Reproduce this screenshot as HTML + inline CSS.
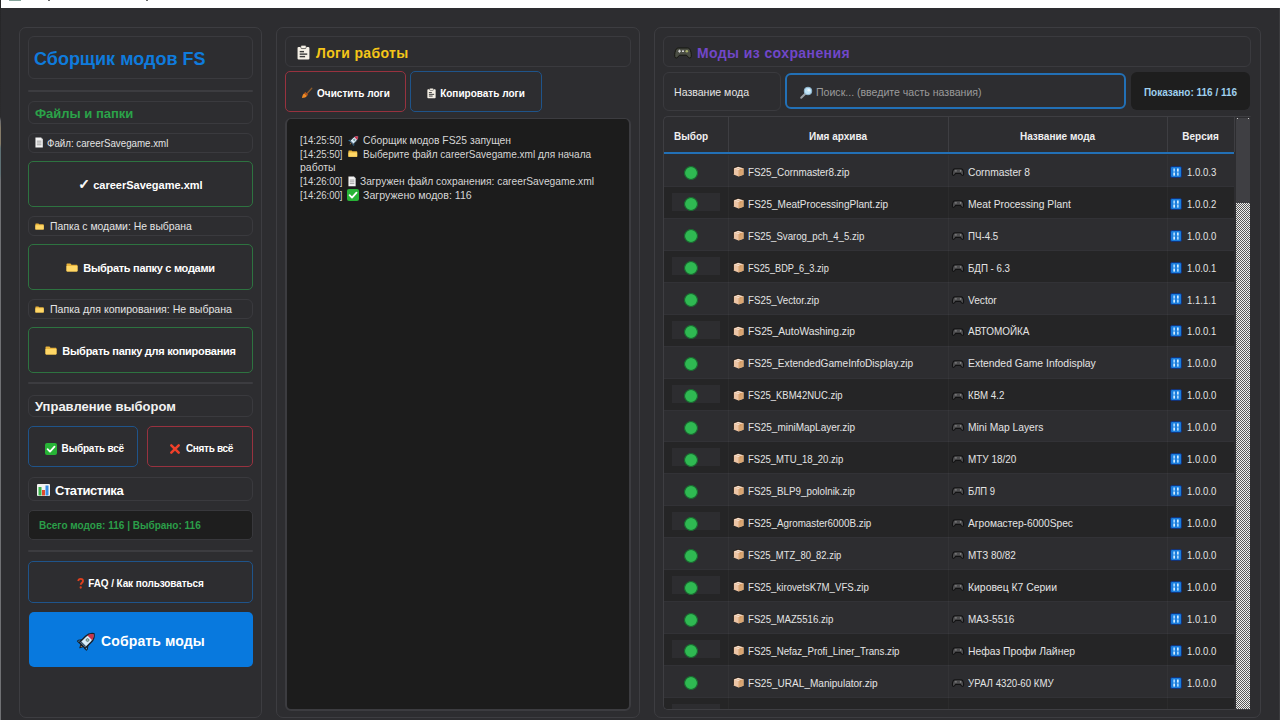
<!DOCTYPE html>
<html lang="ru">
<head>
<meta charset="utf-8">
<title>Сборщик модов FS25</title>
<style>
*{box-sizing:border-box;margin:0;padding:0}
html,body{width:1280px;height:720px;overflow:hidden;background:#2d2d30}
body{position:relative;font-family:"Liberation Sans","DejaVu Sans",sans-serif;font-size:11px;color:#e4e4e4}
.abs{position:absolute}
.titlebar{left:0;top:0;width:1280px;height:8px;background:#fff}
.edgeL{left:0;top:0;width:1px;height:720px;background:linear-gradient(#262628 0,#2b2b2d 117px,#6a6a6c 121px,#857b68 128px,#857b68 144px,#5d7074 148px,#5d7074 174px,#707174 180px,#707174 720px)}
.edgeR{left:1279px;top:8px;width:1px;height:712px;background:#3b3b3e}
.panel{border:1px solid #3d3d41;border-radius:7px}
.box{border:1px solid #3a3a3e;border-radius:6px;display:flex;align-items:center;white-space:nowrap}
.sep{height:2px;background:#3c3c40;border-radius:1px}
.btn{padding-top:1px;border:1px solid #3e3e42;border-radius:5px;display:flex;align-items:center;justify-content:center;font-weight:bold;color:#fff;white-space:nowrap}
.g{border-color:#2d7340}
.b{border-color:#1f548a}
.r{border-color:#98323f}
svg{display:block;flex:none;overflow:visible}
.n{display:inline-block;transform-origin:0 50%;white-space:nowrap}
.cell .n{position:relative;top:.8px}
.log{left:285px;top:118px;width:346px;height:593px;background:#1c1c1c;border:2px solid #3c3c40;border-top-width:1.5px;border-radius:6px}
.ll{position:absolute;left:13px;height:14px;color:#d6d6d6;white-space:nowrap}
.tbl{left:663px;top:116px;width:588px;height:594px;border:1px solid #3e3e42;border-right-color:transparent;border-radius:5px 0 0 5px;overflow:hidden}
.th{position:absolute;top:0;height:35px;padding-top:4px;display:flex;align-items:center;justify-content:center;font-weight:bold;font-size:10px;color:#f0f0f0;border-right:1px solid #3e3e42}
.row{position:absolute;left:0;width:570px;height:32px;border-bottom:1px solid #323236}
.row.alt{background:#252526}
.cell{position:absolute;top:0;height:32px;display:flex;align-items:center;white-space:nowrap}
.dot{position:absolute;left:20px;top:10.5px;width:14px;height:14px;background:radial-gradient(circle at 50% 50%,#2fb952 0,#2fb952 5.4px,#1b6630 6.2px,#1b6630 6.7px,rgba(27,102,48,0) 7.3px)}
.cw{position:absolute;left:8px;top:6px;width:48px;height:18px;background:#2d2d30}
.vl{position:absolute;top:38px;width:1px;height:556px;background:rgba(255,255,255,.03)}
</style>
</head>
<body>
<div class="abs titlebar"></div><div class="abs" style="left:9px;top:0;width:12px;height:1px;background:#86a59b"></div><div class="abs" style="left:48px;top:0;width:2px;height:1px;background:#6a6a6a"></div><div class="abs" style="left:146px;top:0;width:2px;height:1px;background:#6a6a6a"></div><div class="abs edgeL"></div><div class="abs edgeR"></div>
<div class="abs panel" style="left:19px;top:27px;width:243px;height:691px"></div>
<div class="abs box" style="left:28px;top:36px;width:225px;height:43px;padding-left:5px;padding-top:4px;font-size:18px;font-weight:bold;color:#0f7bdc"><span>Сборщик модов FS</span></div>
<div class="abs sep" style="left:28px;top:90px;width:225px"></div>
<div class="abs box" style="left:28px;top:101px;width:225px;height:23px;padding-left:6px;padding-top:2px;font-size:13px;font-weight:bold;color:#2ba349"><span>Файлы и папки</span></div>
<div class="abs box" style="left:28px;top:133px;width:225px;height:20px;padding-left:6px"><svg class="ic" width="8.280000000000001" height="11.040000000000001" viewBox="0 0 9 12" style=""><path d="M0.5 0.5h6l2 2v9h-8z" fill="#f4f4f4"/><path d="M6.5 0.5v2h2z" fill="#c8c8c8"/><rect x="2" y="4" width="5" height="1" fill="#9a9a9a"/><rect x="2" y="6" width="5" height="1" fill="#9a9a9a"/><rect x="2" y="8" width="5" height="1" fill="#9a9a9a"/></svg><span style="width:3.7px"></span><span class="n" style="transform:scaleX(0.885);">Файл: careerSavegame.xml</span></div>
<div class="abs btn g" style="left:28px;top:161px;width:225px;height:46px"><span><span style="font-size:14px;line-height:12px;-webkit-text-stroke:.5px #fff">✓</span> careerSavegame.xml</span></div>
<div class="abs box" style="left:28px;top:216px;width:225px;height:20px;padding-left:6px"><svg class="ic" width="9.120000000000001" height="6.84" viewBox="0 0 12 9" style=""><path d="M0.5 1.2q0-.7.7-.7h3.3l1 1.2h5.3q.7 0 .7.7v5.4q0 .7-.7.7h-9.6q-.7 0-.7-.7z" fill="#e9b43c"/><path d="M0.5 3h11v4.8q0 .7-.7.7h-9.6q-.7 0-.7-.7z" fill="#ffd766"/></svg><span style="width:6px"></span><span class="n" style="transform:scaleX(0.945);">Папка с модами: Не выбрана</span></div>
<div class="abs btn g" style="left:28px;top:244px;width:225px;height:46px"><svg class="ic" width="12" height="9" viewBox="0 0 12 9" style=""><path d="M0.5 1.2q0-.7.7-.7h3.3l1 1.2h5.3q.7 0 .7.7v5.4q0 .7-.7.7h-9.6q-.7 0-.7-.7z" fill="#e9b43c"/><path d="M0.5 3h11v4.8q0 .7-.7.7h-9.6q-.7 0-.7-.7z" fill="#ffd766"/></svg><span style="width:5px"></span><span style="letter-spacing:-.3px">Выбрать папку с модами</span></div>
<div class="abs box" style="left:28px;top:299px;width:225px;height:20px;padding-left:6px"><svg class="ic" width="9.120000000000001" height="6.84" viewBox="0 0 12 9" style=""><path d="M0.5 1.2q0-.7.7-.7h3.3l1 1.2h5.3q.7 0 .7.7v5.4q0 .7-.7.7h-9.6q-.7 0-.7-.7z" fill="#e9b43c"/><path d="M0.5 3h11v4.8q0 .7-.7.7h-9.6q-.7 0-.7-.7z" fill="#ffd766"/></svg><span style="width:6px"></span><span class="n" style="transform:scaleX(0.962);">Папка для копирования: Не выбрана</span></div>
<div class="abs btn g" style="left:28px;top:327px;width:225px;height:46px"><svg class="ic" width="12" height="9" viewBox="0 0 12 9" style=""><path d="M0.5 1.2q0-.7.7-.7h3.3l1 1.2h5.3q.7 0 .7.7v5.4q0 .7-.7.7h-9.6q-.7 0-.7-.7z" fill="#e9b43c"/><path d="M0.5 3h11v4.8q0 .7-.7.7h-9.6q-.7 0-.7-.7z" fill="#ffd766"/></svg><span style="width:5px"></span><span style="letter-spacing:-.27px">Выбрать папку для копирования</span></div>
<div class="abs sep" style="left:28px;top:382px;width:225px"></div>
<div class="abs box" style="left:28px;top:395px;width:225px;height:22px;padding-left:6px;font-size:13px;font-weight:bold;color:#f2f2f2"><span>Управление выбором</span></div>
<div class="abs btn b" style="left:28px;top:426px;width:110px;height:41px;font-size:10px;padding-top:3px;padding-left:3px"><span style="margin-top:2px"><svg class="ic" width="12" height="12" viewBox="0 0 12 12" style=""><rect x="0" y="0" width="12" height="12" rx="2" fill="#27b336"/><path d="M2.6 6.2l2.4 2.4 4.5-5" fill="none" stroke="#fff" stroke-width="1.8" stroke-linecap="round" stroke-linejoin="round"/></svg></span><span style="width:4.500px"></span><span style="letter-spacing:-.2px">Выбрать всё</span></div>
<div class="abs btn r" style="left:147px;top:426px;width:106px;height:41px;font-size:10px;padding-top:3px;padding-left:3px"><span style="margin-top:1px"><svg class="ic" width="10" height="10" viewBox="0 0 10 10" style=""><path d="M1.3 1.3l7.4 7.4M8.7 1.3l-7.4 7.4" stroke="#f0402a" stroke-width="2.5" stroke-linecap="round"/></svg></span><span style="width:6px"></span><span style="letter-spacing:-.3px">Снять всё</span></div>
<div class="abs box" style="left:28px;top:477px;width:225px;height:24px;padding-left:8px;padding-top:2px;font-size:13px;font-weight:bold;color:#fff"><svg class="ic" width="13" height="12" viewBox="0 0 13 12" style=""><rect x="0" y="0" width="13" height="12" rx="1" fill="#f3f3f3"/><rect x="1.5" y="3" width="3" height="8.5" fill="#3bb34a"/><rect x="5" y="6" width="3" height="5.5" fill="#e04a2f"/><rect x="8.5" y="1.5" width="3" height="10" fill="#3a8ee6"/></svg><span style="width:5px"></span><span style="letter-spacing:-.45px">Статистика</span></div>
<div class="abs" style="left:28px;top:510px;width:225px;height:29.5px;background:#1e1e1e;border:1px solid #38383c;border-radius:5px;display:flex;align-items:center;padding-left:10px;padding-top:2px;font-weight:bold;font-size:10px;color:#2b9f49;white-space:nowrap"><span>Всего модов: 116 | Выбрано: 116</span></div>
<div class="abs sep" style="left:28px;top:550px;width:225px"></div>
<div class="abs btn b" style="left:28px;top:561px;width:225px;height:42px;font-size:10px;padding-top:3px"><svg class="ic" width="7" height="11" viewBox="0 0 7 11" style=""><path d="M1.200 3c.2-1.400 1.100-2.100 2.400-2.100 1.400 0 2.400.8 2.400 2.100 0 1.700-2.200 1.900-2.200 3.800" fill="none" stroke="#e0401e" stroke-width="1.900"/><circle cx="3.700" cy="9.500" r="1.150" fill="#e0401e"/></svg><span style="width:4px"></span><span style="letter-spacing:-.1px">FAQ / Как пользоваться</span></div>
<div class="abs btn" style="left:29px;top:612px;width:224px;height:55px;background:#0879de;border:none;font-size:14px;padding-top:3px"><svg class="ic" width="19" height="18" viewBox="0 0 19 18" style=""><g transform="translate(9.800 8.800) rotate(45) scale(.860)"><path d="M-4.400 2.500l-3 4v1.500h3zM4.400 2.500l3 4v1.500h-3z" fill="#4fb3ea" stroke="#17202c" stroke-width="1.200" stroke-linejoin="round"/><path d="M-2 7.500l2 4 2-4z" fill="#f4a53c" stroke="#17202c" stroke-width="1.200" stroke-linejoin="round"/><path d="M0-11.800c3.700 2.600 4.700 6 4.700 9v10.300h-9.400v-10.300c0-3 1-6.400 4.700-9z" fill="#d9edf8" stroke="#17202c" stroke-width="1.700" stroke-linejoin="round"/><path d="M0-11c2.500 1.800 3.600 3.900 3.900 6h-7.800c.3-2.100 1.400-4.200 3.900-6z" fill="#c8344c"/><path d="M-3.900 5h7.800v1.900h-7.800z" fill="#3b5368"/><circle cx="0" cy="-1.200" r="1.700" fill="#9bbfa8" stroke="#3b5368" stroke-width=".7"/></g></svg><span style="width:5px"></span><span style="letter-spacing:.13px">Собрать моды</span></div>
<div class="abs panel" style="left:276px;top:27px;width:364px;height:691px"></div>
<div class="abs box" style="left:285px;top:36px;width:346px;height:31px;padding-left:11px;padding-top:2px;font-size:14px;font-weight:bold;color:#f5c518"><svg class="ic" width="12.96" height="15.120000000000001" viewBox="0 0 12 14" style=""><rect x="0.5" y="1.800" width="11" height="11.700" rx="1" fill="#f5f0e6"/><rect x="3.500" y="0.300" width="5" height="3" rx="1" fill="#f5f0e6" stroke="#2b2b2b" stroke-width=".6"/><rect x="2.500" y="5.500" width="4" height="1.300" fill="#3a3a3a"/><rect x="2.500" y="7.800" width="7" height="1.300" fill="#3a3a3a"/><rect x="2.500" y="10.100" width="5" height="1.300" fill="#3a3a3a"/></svg><span style="width:6px"></span><span style="letter-spacing:.36px">Логи работы</span></div>
<div class="abs btn r" style="left:285px;top:71px;width:121px;height:41px;font-size:10px;padding-top:3px"><svg class="ic" width="12" height="12" viewBox="0 0 12 12" style=""><path d="M10.800 1.200l-5 5.600" stroke="#8a5a2b" stroke-width="1.300" stroke-linecap="round"/><path d="M3.300 6.200l2.700 2.600c-.8 1.500-2.600 2.200-5 2.200.3-2.300 1-4 2.300-4.800z" fill="#f08a24"/><path d="M3.400 6l2.800 2.700.9-.9-2.800-2.700z" fill="#c75a1a"/></svg><span style="width:4px"></span><span>Очистить логи</span></div>
<div class="abs btn b" style="left:410px;top:71px;width:132px;height:41px;font-size:10px;padding-top:3px"><svg class="ic" width="9.0" height="10.5" viewBox="0 0 12 14" style=""><rect x="0.5" y="1.800" width="11" height="11.700" rx="1" fill="#f5f0e6"/><rect x="3.500" y="0.300" width="5" height="3" rx="1" fill="#f5f0e6" stroke="#2b2b2b" stroke-width=".6"/><rect x="2.500" y="5.500" width="4" height="1.300" fill="#3a3a3a"/><rect x="2.500" y="7.800" width="7" height="1.300" fill="#3a3a3a"/><rect x="2.500" y="10.100" width="5" height="1.300" fill="#3a3a3a"/></svg><span style="width:4px"></span><span>Копировать логи</span></div>
<div class="abs log">
<div class="ll" style="top:14px"><span class="abs" style="left:0;top:0;height:14px;display:flex;align-items:center"><span class="n" style="transform:scaleX(0.869);">[14:25:50]</span></span><span class="abs" style="left:47.5px;top:0;height:14px;display:flex;align-items:center"><svg class="ic" width="11.4" height="10.799999999999999" viewBox="0 0 19 18" style=""><g transform="translate(9.800 8.800) rotate(45) scale(.860)"><path d="M-4.400 2.500l-3 4v1.500h3zM4.400 2.500l3 4v1.500h-3z" fill="#4fb3ea" stroke="#17202c" stroke-width="1.200" stroke-linejoin="round"/><path d="M-2 7.500l2 4 2-4z" fill="#f4a53c" stroke="#17202c" stroke-width="1.200" stroke-linejoin="round"/><path d="M0-11.800c3.700 2.600 4.700 6 4.700 9v10.300h-9.400v-10.300c0-3 1-6.400 4.700-9z" fill="#d9edf8" stroke="#17202c" stroke-width="1.700" stroke-linejoin="round"/><path d="M0-11c2.500 1.800 3.600 3.900 3.900 6h-7.800c.3-2.100 1.400-4.200 3.900-6z" fill="#c8344c"/><path d="M-3.900 5h7.800v1.900h-7.800z" fill="#3b5368"/><circle cx="0" cy="-1.200" r="1.700" fill="#9bbfa8" stroke="#3b5368" stroke-width=".7"/></g></svg></span><span class="abs" style="left:62.5px;top:0;height:14px;display:flex;align-items:center"><span class="n" style="transform:scaleX(0.94);">Сборщик модов FS25 запущен</span></span></div>
<div class="ll" style="top:27.7px"><span class="abs" style="left:0;top:0;height:14px;display:flex;align-items:center"><span class="n" style="transform:scaleX(0.869);">[14:25:50]</span></span><span class="abs" style="left:47.5px;top:0;height:14px;display:flex;align-items:center"><svg class="ic" width="9.600000000000001" height="7.2" viewBox="0 0 12 9" style=""><path d="M0.5 1.2q0-.7.7-.7h3.3l1 1.2h5.3q.7 0 .7.7v5.4q0 .7-.7.7h-9.6q-.7 0-.7-.7z" fill="#e9b43c"/><path d="M0.5 3h11v4.8q0 .7-.7.7h-9.6q-.7 0-.7-.7z" fill="#ffd766"/></svg></span><span class="abs" style="left:62.5px;top:0;height:14px;display:flex;align-items:center"><span class="n" style="transform:scaleX(0.913);">Выберите файл careerSavegame.xml для начала</span></span></div>
<div class="ll" style="top:41.3px"><span class="abs" style="left:0px;top:0;height:14px;display:flex;align-items:center"><span class="n" style="transform:scaleX(0.953);">работы</span></span></div>
<div class="ll" style="top:55px"><span class="abs" style="left:0;top:0;height:14px;display:flex;align-items:center"><span class="n" style="transform:scaleX(0.869);">[14:26:00]</span></span><span class="abs" style="left:47.80000000000001px;top:0;height:14px;display:flex;align-items:center"><svg class="ic" width="8.1" height="10.8" viewBox="0 0 9 12" style=""><path d="M0.5 0.5h6l2 2v9h-8z" fill="#f4f4f4"/><path d="M6.5 0.5v2h2z" fill="#c8c8c8"/><rect x="2" y="4" width="5" height="1" fill="#9a9a9a"/><rect x="2" y="6" width="5" height="1" fill="#9a9a9a"/><rect x="2" y="8" width="5" height="1" fill="#9a9a9a"/></svg></span><span class="abs" style="left:59.75px;top:0;height:14px;display:flex;align-items:center"><span class="n" style="transform:scaleX(0.93);">Загружен файл сохранения: careerSavegame.xml</span></span></div>
<div class="ll" style="top:68.6px"><span class="abs" style="left:0;top:0;height:14px;display:flex;align-items:center"><span class="n" style="transform:scaleX(0.869);">[14:26:00]</span></span><span class="abs" style="left:47.30000000000001px;top:0;height:14px;display:flex;align-items:center"><svg class="ic" width="12" height="12" viewBox="0 0 12 12" style=""><rect x="0" y="0" width="12" height="12" rx="2" fill="#27b336"/><path d="M2.6 6.2l2.4 2.4 4.5-5" fill="none" stroke="#fff" stroke-width="1.8" stroke-linecap="round" stroke-linejoin="round"/></svg></span><span class="abs" style="left:62.5px;top:0;height:14px;display:flex;align-items:center"><span class="n" style="transform:scaleX(0.966);">Загружено модов: 116</span></span></div>
</div>
<div class="abs panel" style="left:654px;top:27px;width:607px;height:691px"></div>
<div class="abs box" style="left:663px;top:36px;width:588px;height:31px;padding-left:10px;padding-top:2px;font-size:14px;font-weight:bold;color:#7147c9"><svg class="ic" width="18" height="12" viewBox="0 0 18 12" style=""><path d="M4.500 1h9c2 0 3 1.500 3.500 4.500.5 2.800.6 5.500-1.200 5.500-1.400 0-2.200-1.800-3.300-2.800h-7c-1.100 1-1.900 2.800-3.300 2.800-1.800 0-1.700-2.700-1.200-5.500.5-3 1.500-4.500 3.500-4.500z" fill="#4a4d44" stroke="#15160f" stroke-width="1"/><circle cx="12.800" cy="4.200" r="1.300" fill="#a8b06a"/><rect x="4" y="3.600" width="3" height="1.100" fill="#cfcfcf"/><rect x="4.950" y="2.650" width="1.100" height="3" fill="#cfcfcf"/><circle cx="9" cy="4.200" r=".9" fill="#f2f2f2"/></svg><span style="width:5px"></span><span style="letter-spacing:.4px">Моды из сохранения</span></div>
<div class="abs box" style="left:663px;top:72px;width:118px;height:39px;padding-left:10px"><span class="n" style="transform:scaleX(0.96);">Название мода</span></div>
<div class="abs box" style="left:785px;top:73px;width:341px;height:36px;border:2px solid #2270b6;padding-left:13px;padding-top:2px;color:#9b9b9b"><svg class="ic" width="13" height="13" viewBox="0 0 13 13" style=""><path d="M5.800 7.200l-4.600 4.600" stroke="#9aa0a6" stroke-width="2" stroke-linecap="round"/><circle cx="8" cy="5" r="3.800" fill="#bfe3f7" stroke="#8fb6cf" stroke-width="1"/><circle cx="8.800" cy="4.200" r="1.300" fill="#eaf6fd"/></svg><span style="width:3px"></span><span class="n" style="transform:scaleX(0.96);">Поиск... (введите часть названия)</span></div>
<div class="abs" style="left:1131px;top:72px;width:119px;height:38px;background:#1e1e1e;border-radius:6px;display:flex;align-items:center;justify-content:center;padding-top:2px;font-weight:bold;font-size:10px;color:#9fd0ee;white-space:nowrap"><span>Показано: 116 / 116</span></div>
<div class="abs tbl">
<div class="th" style="left:0px;width:65px;justify-content:flex-start;padding-left:10px"><span>Выбор</span></div>
<div class="th" style="left:64px;width:221px"><span>Имя архива</span></div>
<div class="th" style="left:284px;width:220px"><span>Название мода</span></div>
<div class="th" style="left:503px;width:68px"><span>Версия</span></div>
<div class="abs" style="left:0;top:35px;width:570px;height:2px;background:#2270b6"></div>
<div class="row" style="top:38.0px"><div class="dot"></div><div class="cell" style="left:69px"><svg class="ic" width="11" height="11" viewBox="0 0 11 11" style="margin-top:1px"><path d="M0.500 2.300l4.500-1.800 5.500 1.500v6.700l-5 1.800-5-2z" fill="#ecc5a6"/><path d="M0.500 2.300l5 1.700 5-2-5.500-1.500z" fill="#f7e2d2"/><path d="M5.500 4v6.500l5-1.800v-6.700z" fill="#d9a673"/><path d="M3 1.300l5.200 1.700v2l-1 .4v-2l-5.200-1.600z" fill="#c98a52" opacity=".55"/><path d="M0.400 8.300v-6.200l4.600-1.800 5.600 1.500" fill="none" stroke="#17110c" stroke-width=".9" opacity=".85"/></svg><span style="width:4px"></span><span class="n" style="transform:scaleX(0.897);">FS25_Cornmaster8.zip</span></div><div class="cell" style="left:288px"><svg class="ic" width="12" height="8" viewBox="0 0 12 8" style="margin-top:2px"><path d="M3 .7h6c1.400 0 2 1 2.400 3 .3 1.900.4 3.700-.8 3.700-1 0-1.500-1.300-2.300-2h-4.600c-.8.700-1.300 2-2.300 2-1.200 0-1.100-1.800-.8-3.700.400-2 1-3 2.400-3z" fill="#4c4c4e" stroke="#121213" stroke-width="1.100"/><rect x="2.800" y="2.500" width="2" height=".8" fill="#9a9a9a"/><circle cx="8.600" cy="2.900" r=".8" fill="#8c8c8c"/></svg><span style="width:4px"></span><span class="n" style="transform:scaleX(0.931);">Cornmaster 8</span></div><div class="cell" style="left:506px"><svg class="ic" width="12" height="12" viewBox="0 0 12 12" style="margin-top:1.5px"><rect x=".5" y=".5" width="11" height="11" rx="1.500" fill="#1a7ddc" stroke="#12337a" stroke-width="1"/><rect x="3.300" y="2.500" width="1.700" height="3.100" fill="#a9d8ff"/><rect x="7" y="2.500" width="1.700" height="3.100" fill="#d6eeff"/><rect x="3.300" y="6.500" width="1.700" height="3.100" fill="#d6eeff"/><rect x="7" y="6.500" width="1.700" height="3.100" fill="#a9d8ff"/></svg><span style="width:4.700px"></span><span class="n" style="transform:scaleX(0.87);">1.0.0.3</span></div></div>
<div class="row alt" style="top:69.93px"><div class="cw"></div><div class="dot"></div><div class="cell" style="left:69px"><svg class="ic" width="11" height="11" viewBox="0 0 11 11" style="margin-top:1px"><path d="M0.500 2.300l4.500-1.800 5.500 1.500v6.700l-5 1.800-5-2z" fill="#ecc5a6"/><path d="M0.500 2.300l5 1.700 5-2-5.500-1.500z" fill="#f7e2d2"/><path d="M5.500 4v6.500l5-1.800v-6.700z" fill="#d9a673"/><path d="M3 1.300l5.200 1.700v2l-1 .4v-2l-5.200-1.600z" fill="#c98a52" opacity=".55"/><path d="M0.400 8.300v-6.200l4.600-1.800 5.600 1.500" fill="none" stroke="#17110c" stroke-width=".9" opacity=".85"/></svg><span style="width:4px"></span><span class="n" style="transform:scaleX(0.912);">FS25_MeatProcessingPlant.zip</span></div><div class="cell" style="left:288px"><svg class="ic" width="12" height="8" viewBox="0 0 12 8" style="margin-top:2px"><path d="M3 .7h6c1.400 0 2 1 2.400 3 .3 1.900.4 3.700-.8 3.700-1 0-1.500-1.300-2.300-2h-4.600c-.8.700-1.300 2-2.300 2-1.200 0-1.100-1.800-.8-3.700.400-2 1-3 2.400-3z" fill="#4c4c4e" stroke="#121213" stroke-width="1.100"/><rect x="2.800" y="2.500" width="2" height=".8" fill="#9a9a9a"/><circle cx="8.600" cy="2.900" r=".8" fill="#8c8c8c"/></svg><span style="width:4px"></span><span class="n" style="transform:scaleX(0.934);">Meat Processing Plant</span></div><div class="cell" style="left:506px"><svg class="ic" width="12" height="12" viewBox="0 0 12 12" style="margin-top:1.5px"><rect x=".5" y=".5" width="11" height="11" rx="1.500" fill="#1a7ddc" stroke="#12337a" stroke-width="1"/><rect x="3.300" y="2.500" width="1.700" height="3.100" fill="#a9d8ff"/><rect x="7" y="2.500" width="1.700" height="3.100" fill="#d6eeff"/><rect x="3.300" y="6.500" width="1.700" height="3.100" fill="#d6eeff"/><rect x="7" y="6.500" width="1.700" height="3.100" fill="#a9d8ff"/></svg><span style="width:4.700px"></span><span class="n" style="transform:scaleX(0.87);">1.0.0.2</span></div></div>
<div class="row" style="top:101.86px"><div class="dot"></div><div class="cell" style="left:69px"><svg class="ic" width="11" height="11" viewBox="0 0 11 11" style="margin-top:1px"><path d="M0.500 2.300l4.500-1.800 5.500 1.500v6.700l-5 1.800-5-2z" fill="#ecc5a6"/><path d="M0.500 2.300l5 1.700 5-2-5.500-1.500z" fill="#f7e2d2"/><path d="M5.500 4v6.500l5-1.800v-6.700z" fill="#d9a673"/><path d="M3 1.300l5.200 1.700v2l-1 .4v-2l-5.200-1.600z" fill="#c98a52" opacity=".55"/><path d="M0.400 8.300v-6.200l4.600-1.800 5.600 1.500" fill="none" stroke="#17110c" stroke-width=".9" opacity=".85"/></svg><span style="width:4px"></span><span class="n" style="transform:scaleX(0.876);">FS25_Svarog_pch_4_5.zip</span></div><div class="cell" style="left:288px"><svg class="ic" width="12" height="8" viewBox="0 0 12 8" style="margin-top:2px"><path d="M3 .7h6c1.400 0 2 1 2.400 3 .3 1.900.4 3.700-.8 3.700-1 0-1.500-1.300-2.300-2h-4.600c-.8.700-1.300 2-2.300 2-1.200 0-1.100-1.800-.8-3.700.400-2 1-3 2.400-3z" fill="#4c4c4e" stroke="#121213" stroke-width="1.100"/><rect x="2.800" y="2.500" width="2" height=".8" fill="#9a9a9a"/><circle cx="8.600" cy="2.900" r=".8" fill="#8c8c8c"/></svg><span style="width:4px"></span><span class="n" style="transform:scaleX(0.885);">ПЧ-4.5</span></div><div class="cell" style="left:506px"><svg class="ic" width="12" height="12" viewBox="0 0 12 12" style="margin-top:1.5px"><rect x=".5" y=".5" width="11" height="11" rx="1.500" fill="#1a7ddc" stroke="#12337a" stroke-width="1"/><rect x="3.300" y="2.500" width="1.700" height="3.100" fill="#a9d8ff"/><rect x="7" y="2.500" width="1.700" height="3.100" fill="#d6eeff"/><rect x="3.300" y="6.500" width="1.700" height="3.100" fill="#d6eeff"/><rect x="7" y="6.500" width="1.700" height="3.100" fill="#a9d8ff"/></svg><span style="width:4.700px"></span><span class="n" style="transform:scaleX(0.87);">1.0.0.0</span></div></div>
<div class="row alt" style="top:133.79px"><div class="cw"></div><div class="dot"></div><div class="cell" style="left:69px"><svg class="ic" width="11" height="11" viewBox="0 0 11 11" style="margin-top:1px"><path d="M0.500 2.300l4.500-1.800 5.500 1.500v6.700l-5 1.800-5-2z" fill="#ecc5a6"/><path d="M0.500 2.300l5 1.700 5-2-5.500-1.500z" fill="#f7e2d2"/><path d="M5.500 4v6.500l5-1.800v-6.700z" fill="#d9a673"/><path d="M3 1.300l5.200 1.700v2l-1 .4v-2l-5.200-1.600z" fill="#c98a52" opacity=".55"/><path d="M0.400 8.300v-6.200l4.600-1.800 5.600 1.500" fill="none" stroke="#17110c" stroke-width=".9" opacity=".85"/></svg><span style="width:4px"></span><span class="n" style="transform:scaleX(0.836);">FS25_BDP_6_3.zip</span></div><div class="cell" style="left:288px"><svg class="ic" width="12" height="8" viewBox="0 0 12 8" style="margin-top:2px"><path d="M3 .7h6c1.400 0 2 1 2.400 3 .3 1.900.4 3.700-.8 3.700-1 0-1.500-1.300-2.300-2h-4.600c-.8.700-1.300 2-2.300 2-1.200 0-1.100-1.800-.8-3.700.400-2 1-3 2.400-3z" fill="#4c4c4e" stroke="#121213" stroke-width="1.100"/><rect x="2.800" y="2.500" width="2" height=".8" fill="#9a9a9a"/><circle cx="8.600" cy="2.900" r=".8" fill="#8c8c8c"/></svg><span style="width:4px"></span><span class="n" style="transform:scaleX(0.882);">БДП - 6.3</span></div><div class="cell" style="left:506px"><svg class="ic" width="12" height="12" viewBox="0 0 12 12" style="margin-top:1.5px"><rect x=".5" y=".5" width="11" height="11" rx="1.500" fill="#1a7ddc" stroke="#12337a" stroke-width="1"/><rect x="3.300" y="2.500" width="1.700" height="3.100" fill="#a9d8ff"/><rect x="7" y="2.500" width="1.700" height="3.100" fill="#d6eeff"/><rect x="3.300" y="6.500" width="1.700" height="3.100" fill="#d6eeff"/><rect x="7" y="6.500" width="1.700" height="3.100" fill="#a9d8ff"/></svg><span style="width:4.700px"></span><span class="n" style="transform:scaleX(0.87);">1.0.0.1</span></div></div>
<div class="row" style="top:165.72px"><div class="dot"></div><div class="cell" style="left:69px"><svg class="ic" width="11" height="11" viewBox="0 0 11 11" style="margin-top:1px"><path d="M0.500 2.300l4.500-1.800 5.500 1.500v6.700l-5 1.800-5-2z" fill="#ecc5a6"/><path d="M0.500 2.300l5 1.700 5-2-5.500-1.500z" fill="#f7e2d2"/><path d="M5.500 4v6.500l5-1.800v-6.700z" fill="#d9a673"/><path d="M3 1.300l5.200 1.700v2l-1 .4v-2l-5.200-1.600z" fill="#c98a52" opacity=".55"/><path d="M0.400 8.300v-6.200l4.600-1.800 5.600 1.500" fill="none" stroke="#17110c" stroke-width=".9" opacity=".85"/></svg><span style="width:4px"></span><span class="n" style="transform:scaleX(0.889);">FS25_Vector.zip</span></div><div class="cell" style="left:288px"><svg class="ic" width="12" height="8" viewBox="0 0 12 8" style="margin-top:2px"><path d="M3 .7h6c1.400 0 2 1 2.400 3 .3 1.900.4 3.700-.8 3.700-1 0-1.500-1.300-2.300-2h-4.600c-.8.700-1.300 2-2.300 2-1.200 0-1.100-1.800-.8-3.700.400-2 1-3 2.400-3z" fill="#4c4c4e" stroke="#121213" stroke-width="1.100"/><rect x="2.800" y="2.500" width="2" height=".8" fill="#9a9a9a"/><circle cx="8.600" cy="2.900" r=".8" fill="#8c8c8c"/></svg><span style="width:4px"></span><span class="n" style="transform:scaleX(0.922);">Vector</span></div><div class="cell" style="left:506px"><svg class="ic" width="12" height="12" viewBox="0 0 12 12" style="margin-top:1.5px"><rect x=".5" y=".5" width="11" height="11" rx="1.500" fill="#1a7ddc" stroke="#12337a" stroke-width="1"/><rect x="3.300" y="2.500" width="1.700" height="3.100" fill="#a9d8ff"/><rect x="7" y="2.500" width="1.700" height="3.100" fill="#d6eeff"/><rect x="3.300" y="6.500" width="1.700" height="3.100" fill="#d6eeff"/><rect x="7" y="6.500" width="1.700" height="3.100" fill="#a9d8ff"/></svg><span style="width:4.700px"></span><span class="n" style="transform:scaleX(0.87);">1.1.1.1</span></div></div>
<div class="row alt" style="top:197.65px"><div class="cw"></div><div class="dot"></div><div class="cell" style="left:69px"><svg class="ic" width="11" height="11" viewBox="0 0 11 11" style="margin-top:1px"><path d="M0.500 2.300l4.500-1.800 5.500 1.500v6.700l-5 1.800-5-2z" fill="#ecc5a6"/><path d="M0.500 2.300l5 1.700 5-2-5.500-1.500z" fill="#f7e2d2"/><path d="M5.500 4v6.500l5-1.800v-6.700z" fill="#d9a673"/><path d="M3 1.300l5.200 1.700v2l-1 .4v-2l-5.200-1.600z" fill="#c98a52" opacity=".55"/><path d="M0.400 8.300v-6.200l4.600-1.800 5.600 1.500" fill="none" stroke="#17110c" stroke-width=".9" opacity=".85"/></svg><span style="width:4px"></span><span class="n" style="transform:scaleX(0.934);">FS25_AutoWashing.zip</span></div><div class="cell" style="left:288px"><svg class="ic" width="12" height="8" viewBox="0 0 12 8" style="margin-top:2px"><path d="M3 .7h6c1.400 0 2 1 2.400 3 .3 1.900.4 3.700-.8 3.700-1 0-1.500-1.300-2.300-2h-4.600c-.8.700-1.300 2-2.300 2-1.200 0-1.100-1.800-.8-3.700.400-2 1-3 2.400-3z" fill="#4c4c4e" stroke="#121213" stroke-width="1.100"/><rect x="2.800" y="2.500" width="2" height=".8" fill="#9a9a9a"/><circle cx="8.600" cy="2.900" r=".8" fill="#8c8c8c"/></svg><span style="width:4px"></span><span class="n" style="transform:scaleX(0.903);">АВТОМОЙКА</span></div><div class="cell" style="left:506px"><svg class="ic" width="12" height="12" viewBox="0 0 12 12" style="margin-top:1.5px"><rect x=".5" y=".5" width="11" height="11" rx="1.500" fill="#1a7ddc" stroke="#12337a" stroke-width="1"/><rect x="3.300" y="2.500" width="1.700" height="3.100" fill="#a9d8ff"/><rect x="7" y="2.500" width="1.700" height="3.100" fill="#d6eeff"/><rect x="3.300" y="6.500" width="1.700" height="3.100" fill="#d6eeff"/><rect x="7" y="6.500" width="1.700" height="3.100" fill="#a9d8ff"/></svg><span style="width:4.700px"></span><span class="n" style="transform:scaleX(0.87);">1.0.0.1</span></div></div>
<div class="row" style="top:229.58px"><div class="dot"></div><div class="cell" style="left:69px"><svg class="ic" width="11" height="11" viewBox="0 0 11 11" style="margin-top:1px"><path d="M0.500 2.300l4.500-1.800 5.500 1.500v6.700l-5 1.800-5-2z" fill="#ecc5a6"/><path d="M0.500 2.300l5 1.700 5-2-5.500-1.500z" fill="#f7e2d2"/><path d="M5.500 4v6.500l5-1.800v-6.700z" fill="#d9a673"/><path d="M3 1.300l5.200 1.700v2l-1 .4v-2l-5.200-1.600z" fill="#c98a52" opacity=".55"/><path d="M0.400 8.300v-6.200l4.600-1.800 5.600 1.500" fill="none" stroke="#17110c" stroke-width=".9" opacity=".85"/></svg><span style="width:4px"></span><span class="n" style="transform:scaleX(0.92);">FS25_ExtendedGameInfoDisplay.zip</span></div><div class="cell" style="left:288px"><svg class="ic" width="12" height="8" viewBox="0 0 12 8" style="margin-top:2px"><path d="M3 .7h6c1.400 0 2 1 2.400 3 .3 1.900.4 3.700-.8 3.700-1 0-1.500-1.300-2.300-2h-4.600c-.8.700-1.300 2-2.300 2-1.200 0-1.100-1.800-.8-3.700.400-2 1-3 2.400-3z" fill="#4c4c4e" stroke="#121213" stroke-width="1.100"/><rect x="2.800" y="2.500" width="2" height=".8" fill="#9a9a9a"/><circle cx="8.600" cy="2.900" r=".8" fill="#8c8c8c"/></svg><span style="width:4px"></span><span class="n" style="transform:scaleX(0.945);">Extended Game Infodisplay</span></div><div class="cell" style="left:506px"><svg class="ic" width="12" height="12" viewBox="0 0 12 12" style="margin-top:1.5px"><rect x=".5" y=".5" width="11" height="11" rx="1.500" fill="#1a7ddc" stroke="#12337a" stroke-width="1"/><rect x="3.300" y="2.500" width="1.700" height="3.100" fill="#a9d8ff"/><rect x="7" y="2.500" width="1.700" height="3.100" fill="#d6eeff"/><rect x="3.300" y="6.500" width="1.700" height="3.100" fill="#d6eeff"/><rect x="7" y="6.500" width="1.700" height="3.100" fill="#a9d8ff"/></svg><span style="width:4.700px"></span><span class="n" style="transform:scaleX(0.87);">1.0.0.0</span></div></div>
<div class="row alt" style="top:261.51px"><div class="cw"></div><div class="dot"></div><div class="cell" style="left:69px"><svg class="ic" width="11" height="11" viewBox="0 0 11 11" style="margin-top:1px"><path d="M0.500 2.300l4.500-1.800 5.500 1.500v6.700l-5 1.800-5-2z" fill="#ecc5a6"/><path d="M0.500 2.300l5 1.700 5-2-5.500-1.500z" fill="#f7e2d2"/><path d="M5.500 4v6.500l5-1.800v-6.700z" fill="#d9a673"/><path d="M3 1.300l5.200 1.700v2l-1 .4v-2l-5.200-1.600z" fill="#c98a52" opacity=".55"/><path d="M0.400 8.300v-6.200l4.600-1.800 5.600 1.500" fill="none" stroke="#17110c" stroke-width=".9" opacity=".85"/></svg><span style="width:4px"></span><span class="n" style="transform:scaleX(0.864);">FS25_KBM42NUC.zip</span></div><div class="cell" style="left:288px"><svg class="ic" width="12" height="8" viewBox="0 0 12 8" style="margin-top:2px"><path d="M3 .7h6c1.400 0 2 1 2.400 3 .3 1.900.4 3.700-.8 3.700-1 0-1.500-1.300-2.300-2h-4.600c-.8.700-1.300 2-2.300 2-1.200 0-1.100-1.800-.8-3.700.400-2 1-3 2.400-3z" fill="#4c4c4e" stroke="#121213" stroke-width="1.100"/><rect x="2.800" y="2.500" width="2" height=".8" fill="#9a9a9a"/><circle cx="8.600" cy="2.900" r=".8" fill="#8c8c8c"/></svg><span style="width:4px"></span><span class="n" style="transform:scaleX(0.879);">КВМ 4.2</span></div><div class="cell" style="left:506px"><svg class="ic" width="12" height="12" viewBox="0 0 12 12" style="margin-top:1.5px"><rect x=".5" y=".5" width="11" height="11" rx="1.500" fill="#1a7ddc" stroke="#12337a" stroke-width="1"/><rect x="3.300" y="2.500" width="1.700" height="3.100" fill="#a9d8ff"/><rect x="7" y="2.500" width="1.700" height="3.100" fill="#d6eeff"/><rect x="3.300" y="6.500" width="1.700" height="3.100" fill="#d6eeff"/><rect x="7" y="6.500" width="1.700" height="3.100" fill="#a9d8ff"/></svg><span style="width:4.700px"></span><span class="n" style="transform:scaleX(0.87);">1.0.0.0</span></div></div>
<div class="row" style="top:293.44px"><div class="dot"></div><div class="cell" style="left:69px"><svg class="ic" width="11" height="11" viewBox="0 0 11 11" style="margin-top:1px"><path d="M0.500 2.300l4.500-1.800 5.500 1.500v6.700l-5 1.800-5-2z" fill="#ecc5a6"/><path d="M0.500 2.300l5 1.700 5-2-5.500-1.500z" fill="#f7e2d2"/><path d="M5.500 4v6.500l5-1.800v-6.700z" fill="#d9a673"/><path d="M3 1.300l5.200 1.700v2l-1 .4v-2l-5.200-1.600z" fill="#c98a52" opacity=".55"/><path d="M0.400 8.300v-6.200l4.600-1.800 5.600 1.500" fill="none" stroke="#17110c" stroke-width=".9" opacity=".85"/></svg><span style="width:4px"></span><span class="n" style="transform:scaleX(0.907);">FS25_miniMapLayer.zip</span></div><div class="cell" style="left:288px"><svg class="ic" width="12" height="8" viewBox="0 0 12 8" style="margin-top:2px"><path d="M3 .7h6c1.400 0 2 1 2.400 3 .3 1.900.4 3.700-.8 3.700-1 0-1.500-1.300-2.300-2h-4.600c-.8.700-1.300 2-2.300 2-1.200 0-1.100-1.800-.8-3.700.400-2 1-3 2.400-3z" fill="#4c4c4e" stroke="#121213" stroke-width="1.100"/><rect x="2.800" y="2.500" width="2" height=".8" fill="#9a9a9a"/><circle cx="8.600" cy="2.900" r=".8" fill="#8c8c8c"/></svg><span style="width:4px"></span><span class="n" style="transform:scaleX(0.933);">Mini Map Layers</span></div><div class="cell" style="left:506px"><svg class="ic" width="12" height="12" viewBox="0 0 12 12" style="margin-top:1.5px"><rect x=".5" y=".5" width="11" height="11" rx="1.500" fill="#1a7ddc" stroke="#12337a" stroke-width="1"/><rect x="3.300" y="2.500" width="1.700" height="3.100" fill="#a9d8ff"/><rect x="7" y="2.500" width="1.700" height="3.100" fill="#d6eeff"/><rect x="3.300" y="6.500" width="1.700" height="3.100" fill="#d6eeff"/><rect x="7" y="6.500" width="1.700" height="3.100" fill="#a9d8ff"/></svg><span style="width:4.700px"></span><span class="n" style="transform:scaleX(0.87);">1.0.0.0</span></div></div>
<div class="row alt" style="top:325.37px"><div class="cw"></div><div class="dot"></div><div class="cell" style="left:69px"><svg class="ic" width="11" height="11" viewBox="0 0 11 11" style="margin-top:1px"><path d="M0.500 2.300l4.500-1.800 5.500 1.500v6.700l-5 1.800-5-2z" fill="#ecc5a6"/><path d="M0.500 2.300l5 1.700 5-2-5.500-1.500z" fill="#f7e2d2"/><path d="M5.500 4v6.500l5-1.800v-6.700z" fill="#d9a673"/><path d="M3 1.300l5.200 1.700v2l-1 .4v-2l-5.200-1.600z" fill="#c98a52" opacity=".55"/><path d="M0.400 8.300v-6.200l4.600-1.800 5.600 1.500" fill="none" stroke="#17110c" stroke-width=".9" opacity=".85"/></svg><span style="width:4px"></span><span class="n" style="transform:scaleX(0.865);">FS25_MTU_18_20.zip</span></div><div class="cell" style="left:288px"><svg class="ic" width="12" height="8" viewBox="0 0 12 8" style="margin-top:2px"><path d="M3 .7h6c1.400 0 2 1 2.400 3 .3 1.900.4 3.700-.8 3.700-1 0-1.500-1.300-2.300-2h-4.600c-.8.700-1.300 2-2.300 2-1.200 0-1.100-1.800-.8-3.700.400-2 1-3 2.400-3z" fill="#4c4c4e" stroke="#121213" stroke-width="1.100"/><rect x="2.800" y="2.500" width="2" height=".8" fill="#9a9a9a"/><circle cx="8.600" cy="2.900" r=".8" fill="#8c8c8c"/></svg><span style="width:4px"></span><span class="n" style="transform:scaleX(0.903);">МТУ 18/20</span></div><div class="cell" style="left:506px"><svg class="ic" width="12" height="12" viewBox="0 0 12 12" style="margin-top:1.5px"><rect x=".5" y=".5" width="11" height="11" rx="1.500" fill="#1a7ddc" stroke="#12337a" stroke-width="1"/><rect x="3.300" y="2.500" width="1.700" height="3.100" fill="#a9d8ff"/><rect x="7" y="2.500" width="1.700" height="3.100" fill="#d6eeff"/><rect x="3.300" y="6.500" width="1.700" height="3.100" fill="#d6eeff"/><rect x="7" y="6.500" width="1.700" height="3.100" fill="#a9d8ff"/></svg><span style="width:4.700px"></span><span class="n" style="transform:scaleX(0.87);">1.0.0.0</span></div></div>
<div class="row" style="top:357.3px"><div class="dot"></div><div class="cell" style="left:69px"><svg class="ic" width="11" height="11" viewBox="0 0 11 11" style="margin-top:1px"><path d="M0.500 2.300l4.500-1.800 5.500 1.500v6.700l-5 1.800-5-2z" fill="#ecc5a6"/><path d="M0.500 2.300l5 1.700 5-2-5.500-1.500z" fill="#f7e2d2"/><path d="M5.500 4v6.500l5-1.800v-6.700z" fill="#d9a673"/><path d="M3 1.300l5.200 1.700v2l-1 .4v-2l-5.200-1.600z" fill="#c98a52" opacity=".55"/><path d="M0.400 8.300v-6.200l4.600-1.800 5.600 1.500" fill="none" stroke="#17110c" stroke-width=".9" opacity=".85"/></svg><span style="width:4px"></span><span class="n" style="transform:scaleX(0.893);">FS25_BLP9_pololnik.zip</span></div><div class="cell" style="left:288px"><svg class="ic" width="12" height="8" viewBox="0 0 12 8" style="margin-top:2px"><path d="M3 .7h6c1.400 0 2 1 2.400 3 .3 1.900.4 3.700-.8 3.700-1 0-1.500-1.300-2.300-2h-4.600c-.8.700-1.300 2-2.300 2-1.200 0-1.100-1.800-.8-3.700.400-2 1-3 2.400-3z" fill="#4c4c4e" stroke="#121213" stroke-width="1.100"/><rect x="2.800" y="2.500" width="2" height=".8" fill="#9a9a9a"/><circle cx="8.600" cy="2.900" r=".8" fill="#8c8c8c"/></svg><span style="width:4px"></span><span class="n" style="transform:scaleX(0.857);">БЛП 9</span></div><div class="cell" style="left:506px"><svg class="ic" width="12" height="12" viewBox="0 0 12 12" style="margin-top:1.5px"><rect x=".5" y=".5" width="11" height="11" rx="1.500" fill="#1a7ddc" stroke="#12337a" stroke-width="1"/><rect x="3.300" y="2.500" width="1.700" height="3.100" fill="#a9d8ff"/><rect x="7" y="2.500" width="1.700" height="3.100" fill="#d6eeff"/><rect x="3.300" y="6.500" width="1.700" height="3.100" fill="#d6eeff"/><rect x="7" y="6.500" width="1.700" height="3.100" fill="#a9d8ff"/></svg><span style="width:4.700px"></span><span class="n" style="transform:scaleX(0.87);">1.0.0.0</span></div></div>
<div class="row alt" style="top:389.23px"><div class="cw"></div><div class="dot"></div><div class="cell" style="left:69px"><svg class="ic" width="11" height="11" viewBox="0 0 11 11" style="margin-top:1px"><path d="M0.500 2.300l4.500-1.800 5.500 1.500v6.700l-5 1.800-5-2z" fill="#ecc5a6"/><path d="M0.500 2.300l5 1.700 5-2-5.500-1.500z" fill="#f7e2d2"/><path d="M5.500 4v6.500l5-1.800v-6.700z" fill="#d9a673"/><path d="M3 1.300l5.200 1.700v2l-1 .4v-2l-5.200-1.600z" fill="#c98a52" opacity=".55"/><path d="M0.400 8.300v-6.200l4.600-1.800 5.600 1.500" fill="none" stroke="#17110c" stroke-width=".9" opacity=".85"/></svg><span style="width:4px"></span><span class="n" style="transform:scaleX(0.892);">FS25_Agromaster6000B.zip</span></div><div class="cell" style="left:288px"><svg class="ic" width="12" height="8" viewBox="0 0 12 8" style="margin-top:2px"><path d="M3 .7h6c1.400 0 2 1 2.400 3 .3 1.900.4 3.700-.8 3.700-1 0-1.500-1.300-2.300-2h-4.600c-.8.700-1.300 2-2.300 2-1.200 0-1.100-1.800-.8-3.700.400-2 1-3 2.400-3z" fill="#4c4c4e" stroke="#121213" stroke-width="1.100"/><rect x="2.800" y="2.500" width="2" height=".8" fill="#9a9a9a"/><circle cx="8.600" cy="2.900" r=".8" fill="#8c8c8c"/></svg><span style="width:4px"></span><span class="n" style="transform:scaleX(0.928);">Агромастер-6000Spec</span></div><div class="cell" style="left:506px"><svg class="ic" width="12" height="12" viewBox="0 0 12 12" style="margin-top:1.5px"><rect x=".5" y=".5" width="11" height="11" rx="1.500" fill="#1a7ddc" stroke="#12337a" stroke-width="1"/><rect x="3.300" y="2.500" width="1.700" height="3.100" fill="#a9d8ff"/><rect x="7" y="2.500" width="1.700" height="3.100" fill="#d6eeff"/><rect x="3.300" y="6.500" width="1.700" height="3.100" fill="#d6eeff"/><rect x="7" y="6.500" width="1.700" height="3.100" fill="#a9d8ff"/></svg><span style="width:4.700px"></span><span class="n" style="transform:scaleX(0.87);">1.0.0.0</span></div></div>
<div class="row" style="top:421.16px"><div class="dot"></div><div class="cell" style="left:69px"><svg class="ic" width="11" height="11" viewBox="0 0 11 11" style="margin-top:1px"><path d="M0.500 2.300l4.500-1.800 5.500 1.500v6.700l-5 1.800-5-2z" fill="#ecc5a6"/><path d="M0.500 2.300l5 1.700 5-2-5.500-1.500z" fill="#f7e2d2"/><path d="M5.500 4v6.500l5-1.800v-6.700z" fill="#d9a673"/><path d="M3 1.300l5.200 1.700v2l-1 .4v-2l-5.200-1.600z" fill="#c98a52" opacity=".55"/><path d="M0.400 8.300v-6.200l4.600-1.800 5.600 1.500" fill="none" stroke="#17110c" stroke-width=".9" opacity=".85"/></svg><span style="width:4px"></span><span class="n" style="transform:scaleX(0.857);">FS25_MTZ_80_82.zip</span></div><div class="cell" style="left:288px"><svg class="ic" width="12" height="8" viewBox="0 0 12 8" style="margin-top:2px"><path d="M3 .7h6c1.400 0 2 1 2.400 3 .3 1.900.4 3.700-.8 3.700-1 0-1.500-1.300-2.300-2h-4.600c-.8.700-1.300 2-2.300 2-1.200 0-1.100-1.800-.8-3.700.400-2 1-3 2.400-3z" fill="#4c4c4e" stroke="#121213" stroke-width="1.100"/><rect x="2.800" y="2.500" width="2" height=".8" fill="#9a9a9a"/><circle cx="8.600" cy="2.900" r=".8" fill="#8c8c8c"/></svg><span style="width:4px"></span><span class="n" style="transform:scaleX(0.901);">МТЗ 80/82</span></div><div class="cell" style="left:506px"><svg class="ic" width="12" height="12" viewBox="0 0 12 12" style="margin-top:1.5px"><rect x=".5" y=".5" width="11" height="11" rx="1.500" fill="#1a7ddc" stroke="#12337a" stroke-width="1"/><rect x="3.300" y="2.500" width="1.700" height="3.100" fill="#a9d8ff"/><rect x="7" y="2.500" width="1.700" height="3.100" fill="#d6eeff"/><rect x="3.300" y="6.500" width="1.700" height="3.100" fill="#d6eeff"/><rect x="7" y="6.500" width="1.700" height="3.100" fill="#a9d8ff"/></svg><span style="width:4.700px"></span><span class="n" style="transform:scaleX(0.87);">1.0.0.0</span></div></div>
<div class="row alt" style="top:453.09px"><div class="cw"></div><div class="dot"></div><div class="cell" style="left:69px"><svg class="ic" width="11" height="11" viewBox="0 0 11 11" style="margin-top:1px"><path d="M0.500 2.300l4.500-1.800 5.500 1.500v6.700l-5 1.800-5-2z" fill="#ecc5a6"/><path d="M0.500 2.300l5 1.700 5-2-5.500-1.500z" fill="#f7e2d2"/><path d="M5.500 4v6.500l5-1.800v-6.700z" fill="#d9a673"/><path d="M3 1.300l5.200 1.700v2l-1 .4v-2l-5.200-1.600z" fill="#c98a52" opacity=".55"/><path d="M0.400 8.300v-6.200l4.600-1.800 5.600 1.500" fill="none" stroke="#17110c" stroke-width=".9" opacity=".85"/></svg><span style="width:4px"></span><span class="n" style="transform:scaleX(0.878);">FS25_kirovetsK7M_VFS.zip</span></div><div class="cell" style="left:288px"><svg class="ic" width="12" height="8" viewBox="0 0 12 8" style="margin-top:2px"><path d="M3 .7h6c1.400 0 2 1 2.400 3 .3 1.900.4 3.700-.8 3.700-1 0-1.500-1.300-2.300-2h-4.600c-.8.700-1.300 2-2.300 2-1.200 0-1.100-1.800-.8-3.700.400-2 1-3 2.400-3z" fill="#4c4c4e" stroke="#121213" stroke-width="1.100"/><rect x="2.800" y="2.500" width="2" height=".8" fill="#9a9a9a"/><circle cx="8.600" cy="2.900" r=".8" fill="#8c8c8c"/></svg><span style="width:4px"></span><span class="n" style="transform:scaleX(0.946);">Кировец К7 Серии</span></div><div class="cell" style="left:506px"><svg class="ic" width="12" height="12" viewBox="0 0 12 12" style="margin-top:1.5px"><rect x=".5" y=".5" width="11" height="11" rx="1.500" fill="#1a7ddc" stroke="#12337a" stroke-width="1"/><rect x="3.300" y="2.500" width="1.700" height="3.100" fill="#a9d8ff"/><rect x="7" y="2.500" width="1.700" height="3.100" fill="#d6eeff"/><rect x="3.300" y="6.500" width="1.700" height="3.100" fill="#d6eeff"/><rect x="7" y="6.500" width="1.700" height="3.100" fill="#a9d8ff"/></svg><span style="width:4.700px"></span><span class="n" style="transform:scaleX(0.87);">1.0.0.0</span></div></div>
<div class="row" style="top:485.02px"><div class="dot"></div><div class="cell" style="left:69px"><svg class="ic" width="11" height="11" viewBox="0 0 11 11" style="margin-top:1px"><path d="M0.500 2.300l4.500-1.800 5.500 1.500v6.700l-5 1.800-5-2z" fill="#ecc5a6"/><path d="M0.500 2.300l5 1.700 5-2-5.500-1.500z" fill="#f7e2d2"/><path d="M5.500 4v6.500l5-1.800v-6.700z" fill="#d9a673"/><path d="M3 1.300l5.200 1.700v2l-1 .4v-2l-5.200-1.600z" fill="#c98a52" opacity=".55"/><path d="M0.400 8.300v-6.200l4.600-1.800 5.600 1.500" fill="none" stroke="#17110c" stroke-width=".9" opacity=".85"/></svg><span style="width:4px"></span><span class="n" style="transform:scaleX(0.877);">FS25_MAZ5516.zip</span></div><div class="cell" style="left:288px"><svg class="ic" width="12" height="8" viewBox="0 0 12 8" style="margin-top:2px"><path d="M3 .7h6c1.400 0 2 1 2.400 3 .3 1.900.4 3.700-.8 3.700-1 0-1.500-1.300-2.300-2h-4.600c-.8.700-1.300 2-2.300 2-1.200 0-1.100-1.800-.8-3.700.400-2 1-3 2.400-3z" fill="#4c4c4e" stroke="#121213" stroke-width="1.100"/><rect x="2.800" y="2.500" width="2" height=".8" fill="#9a9a9a"/><circle cx="8.600" cy="2.900" r=".8" fill="#8c8c8c"/></svg><span style="width:4px"></span><span class="n" style="transform:scaleX(0.904);">МАЗ-5516</span></div><div class="cell" style="left:506px"><svg class="ic" width="12" height="12" viewBox="0 0 12 12" style="margin-top:1.5px"><rect x=".5" y=".5" width="11" height="11" rx="1.500" fill="#1a7ddc" stroke="#12337a" stroke-width="1"/><rect x="3.300" y="2.500" width="1.700" height="3.100" fill="#a9d8ff"/><rect x="7" y="2.500" width="1.700" height="3.100" fill="#d6eeff"/><rect x="3.300" y="6.500" width="1.700" height="3.100" fill="#d6eeff"/><rect x="7" y="6.500" width="1.700" height="3.100" fill="#a9d8ff"/></svg><span style="width:4.700px"></span><span class="n" style="transform:scaleX(0.87);">1.0.1.0</span></div></div>
<div class="row alt" style="top:516.95px"><div class="cw"></div><div class="dot"></div><div class="cell" style="left:69px"><svg class="ic" width="11" height="11" viewBox="0 0 11 11" style="margin-top:1px"><path d="M0.500 2.300l4.500-1.800 5.500 1.500v6.700l-5 1.800-5-2z" fill="#ecc5a6"/><path d="M0.500 2.300l5 1.700 5-2-5.500-1.500z" fill="#f7e2d2"/><path d="M5.500 4v6.500l5-1.800v-6.700z" fill="#d9a673"/><path d="M3 1.300l5.200 1.700v2l-1 .4v-2l-5.200-1.600z" fill="#c98a52" opacity=".55"/><path d="M0.400 8.300v-6.200l4.600-1.800 5.600 1.500" fill="none" stroke="#17110c" stroke-width=".9" opacity=".85"/></svg><span style="width:4px"></span><span class="n" style="transform:scaleX(0.884);">FS25_Nefaz_Profi_Liner_Trans.zip</span></div><div class="cell" style="left:288px"><svg class="ic" width="12" height="8" viewBox="0 0 12 8" style="margin-top:2px"><path d="M3 .7h6c1.400 0 2 1 2.400 3 .3 1.900.4 3.700-.8 3.700-1 0-1.500-1.300-2.300-2h-4.600c-.8.700-1.300 2-2.300 2-1.200 0-1.100-1.800-.8-3.700.400-2 1-3 2.400-3z" fill="#4c4c4e" stroke="#121213" stroke-width="1.100"/><rect x="2.800" y="2.500" width="2" height=".8" fill="#9a9a9a"/><circle cx="8.600" cy="2.900" r=".8" fill="#8c8c8c"/></svg><span style="width:4px"></span><span class="n" style="transform:scaleX(0.943);">Нефаз Профи Лайнер</span></div><div class="cell" style="left:506px"><svg class="ic" width="12" height="12" viewBox="0 0 12 12" style="margin-top:1.5px"><rect x=".5" y=".5" width="11" height="11" rx="1.500" fill="#1a7ddc" stroke="#12337a" stroke-width="1"/><rect x="3.300" y="2.500" width="1.700" height="3.100" fill="#a9d8ff"/><rect x="7" y="2.500" width="1.700" height="3.100" fill="#d6eeff"/><rect x="3.300" y="6.500" width="1.700" height="3.100" fill="#d6eeff"/><rect x="7" y="6.500" width="1.700" height="3.100" fill="#a9d8ff"/></svg><span style="width:4.700px"></span><span class="n" style="transform:scaleX(0.87);">1.0.0.0</span></div></div>
<div class="row" style="top:548.88px"><div class="dot"></div><div class="cell" style="left:69px"><svg class="ic" width="11" height="11" viewBox="0 0 11 11" style="margin-top:1px"><path d="M0.500 2.300l4.500-1.800 5.500 1.500v6.700l-5 1.800-5-2z" fill="#ecc5a6"/><path d="M0.500 2.300l5 1.700 5-2-5.500-1.500z" fill="#f7e2d2"/><path d="M5.500 4v6.500l5-1.800v-6.700z" fill="#d9a673"/><path d="M3 1.300l5.200 1.700v2l-1 .4v-2l-5.200-1.600z" fill="#c98a52" opacity=".55"/><path d="M0.400 8.300v-6.200l4.600-1.800 5.600 1.500" fill="none" stroke="#17110c" stroke-width=".9" opacity=".85"/></svg><span style="width:4px"></span><span class="n" style="transform:scaleX(0.913);">FS25_URAL_Manipulator.zip</span></div><div class="cell" style="left:288px"><svg class="ic" width="12" height="8" viewBox="0 0 12 8" style="margin-top:2px"><path d="M3 .7h6c1.400 0 2 1 2.400 3 .3 1.900.4 3.700-.8 3.700-1 0-1.500-1.300-2.300-2h-4.600c-.8.700-1.300 2-2.300 2-1.200 0-1.100-1.800-.8-3.700.400-2 1-3 2.400-3z" fill="#4c4c4e" stroke="#121213" stroke-width="1.100"/><rect x="2.800" y="2.500" width="2" height=".8" fill="#9a9a9a"/><circle cx="8.600" cy="2.900" r=".8" fill="#8c8c8c"/></svg><span style="width:4px"></span><span class="n" style="transform:scaleX(0.879);">УРАЛ 4320-60 КМУ</span></div><div class="cell" style="left:506px"><svg class="ic" width="12" height="12" viewBox="0 0 12 12" style="margin-top:1.5px"><rect x=".5" y=".5" width="11" height="11" rx="1.500" fill="#1a7ddc" stroke="#12337a" stroke-width="1"/><rect x="3.300" y="2.500" width="1.700" height="3.100" fill="#a9d8ff"/><rect x="7" y="2.500" width="1.700" height="3.100" fill="#d6eeff"/><rect x="3.300" y="6.500" width="1.700" height="3.100" fill="#d6eeff"/><rect x="7" y="6.500" width="1.700" height="3.100" fill="#a9d8ff"/></svg><span style="width:4.700px"></span><span class="n" style="transform:scaleX(0.87);">1.0.0.0</span></div></div>
<div class="row alt" style="top:580.81px"><div class="cw"></div></div>
<div class="vl" style="left:64px"></div>
<div class="vl" style="left:284px"></div>
<div class="vl" style="left:503px"></div>
<div class="abs" style="left:572px;top:1px;width:14px;height:591px;background:conic-gradient(#f0f0f0 25%,#585858 0 50%,#f0f0f0 0 75%,#585858 0) 0 0/2px 2px"></div>
<div class="abs" style="left:572px;top:1px;width:14px;height:85px;background:#3f3f43"></div>
<div class="abs" style="left:573px;top:1px;width:1px;height:1px;background:#c8c8c8"></div><div class="abs" style="left:584px;top:1px;width:1px;height:1px;background:#c8c8c8"></div>
</div>
</body>
</html>
